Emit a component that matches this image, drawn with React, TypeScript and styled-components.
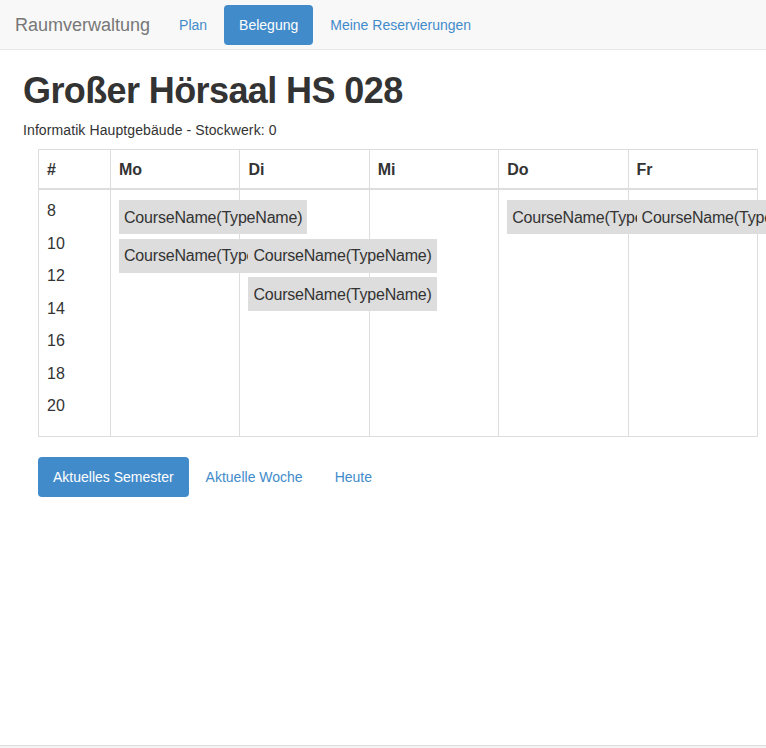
import React from "react";
import styled, { createGlobalStyle } from "styled-components";

const Global = createGlobalStyle`
  html, body {
    margin: 0;
    padding: 0;
    overflow: hidden;
    background: #fff;
    color: #333;
    font-family: "Liberation Sans", Arial, Helvetica, sans-serif;
    font-size: 14px;
    line-height: 1.42857;
  }
  * { box-sizing: border-box; }
`;

const Page = styled.div`
  height: 100vh;
  display: flex;
  flex-direction: column;
  overflow: hidden;
`;

const NavBar = styled.nav`
  height: 50px;
  flex-shrink: 0;
  background: #f8f8f8;
  border-bottom: 1px solid #e7e7e7;
  display: flex;
  align-items: flex-start;
`;

const Brand = styled.span`
  padding: 15px 14px 0 15px;
  font-size: 18px;
  line-height: 20px;
  color: #777;
`;

const Pills = styled.ul<{ $indent?: number; $top?: number }>`
  list-style: none;
  margin: ${(p) => p.$top ?? 0}px 0 0 ${(p) => p.$indent ?? 0}px;
  padding: 0;
  display: flex;
  gap: 2px;
`;

const Pill = styled.li<{ $active?: boolean }>`
  padding: 10px 15px;
  font-size: 14px;
  line-height: 20px;
  border-radius: 4px;
  color: ${(p) => (p.$active ? "#fff" : "#428bca")};
  background: ${(p) => (p.$active ? "#428bca" : "transparent")};
  cursor: pointer;
`;

const Main = styled.main`
  flex: 1;
  padding: 0 23px;
`;

const Title = styled.h1`
  margin: 21px 0 9px;
  font-size: 36px;
  line-height: 1.1;
  font-weight: bold;
  letter-spacing: -0.6px;
  color: #333;
`;

const Subtitle = styled.p`
  margin: 0 0 9px;
  font-size: 14px;
  line-height: 20px;
  letter-spacing: 0.1px;
`;

const Table = styled.table`
  width: 720px;
  margin: 0 0 20px 15px;
  border-collapse: collapse;
  table-layout: fixed;
  font-size: 16px;
  line-height: 1.42857;
`;

const HeadCell = styled.th<{ $w?: number }>`
  width: ${(p) => (p.$w ? `${p.$w}px` : "auto")};
  text-align: left;
  font-weight: bold;
  padding: 9px 8px 7px;
  border: 1px solid #ddd;
  border-bottom: 2px solid #ddd;
  vertical-align: bottom;
`;

const Cell = styled.td`
  padding: 8px;
  border: 1px solid #ddd;
  vertical-align: top;
`;

const HourList = styled.div`
  display: flex;
  flex-direction: column;
  padding-top: 2px;
`;

const Hour = styled.div`
  line-height: 22.86px;
  margin-bottom: 9.6px;
`;

const SlotList = styled.div`
  display: flex;
  flex-direction: column;
  align-items: flex-start;
  padding-top: 2px;
`;

const Slot = styled.div`
  height: 34px;
  margin-bottom: 4.5px;
`;

const Course = styled.div`
  height: 34px;
  margin-bottom: 4.5px;
  padding: 5.5px 5px;
  line-height: 23px;
  background: #ddd;
  color: #333;
  white-space: nowrap;
  letter-spacing: -0.2px;
`;

const Footer = styled.footer`
  height: 3px;
  flex-shrink: 0;
  border-top: 1px solid #ddd;
  background: #f5f5f5;
`;

const C = "CourseName(TypeName)";
const hours = [8, 10, 12, 14, 16, 18, 20];
const days: { name: string; slots: (string | null)[] }[] = [
  { name: "Mo", slots: [C, C] },
  { name: "Di", slots: [null, C, C] },
  { name: "Mi", slots: [] },
  { name: "Do", slots: [C] },
  { name: "Fr", slots: [C] },
];

export default function App() {
  return (
    <Page>
      <Global />
      <NavBar>
        <Brand>Raumverwaltung</Brand>
        <Pills $top={5}>
          <Pill>Plan</Pill>
          <Pill $active>Belegung</Pill>
          <Pill>Meine Reservierungen</Pill>
        </Pills>
      </NavBar>
      <Main>
        <Title>Großer Hörsaal HS 028</Title>
        <Subtitle>Informatik Hauptgebäude - Stockwerk: 0</Subtitle>
        <Table>
          <thead>
            <tr>
              <HeadCell $w={72}>#</HeadCell>
              {days.map((d) => (
                <HeadCell key={d.name}>{d.name}</HeadCell>
              ))}
            </tr>
          </thead>
          <tbody>
            <tr>
              <Cell>
                <HourList>
                  {hours.map((h) => (
                    <Hour key={h}>{h}</Hour>
                  ))}
                </HourList>
              </Cell>
              {days.map((d) => (
                <Cell key={d.name}>
                  <SlotList>
                    {d.slots.map((s, i) =>
                      s ? <Course key={i}>{s}</Course> : <Slot key={i} />
                    )}
                  </SlotList>
                </Cell>
              ))}
            </tr>
          </tbody>
        </Table>
        <Pills $indent={15}>
          <Pill $active>Aktuelles Semester</Pill>
          <Pill>Aktuelle Woche</Pill>
          <Pill>Heute</Pill>
        </Pills>
      </Main>
      <Footer />
    </Page>
  );
}
